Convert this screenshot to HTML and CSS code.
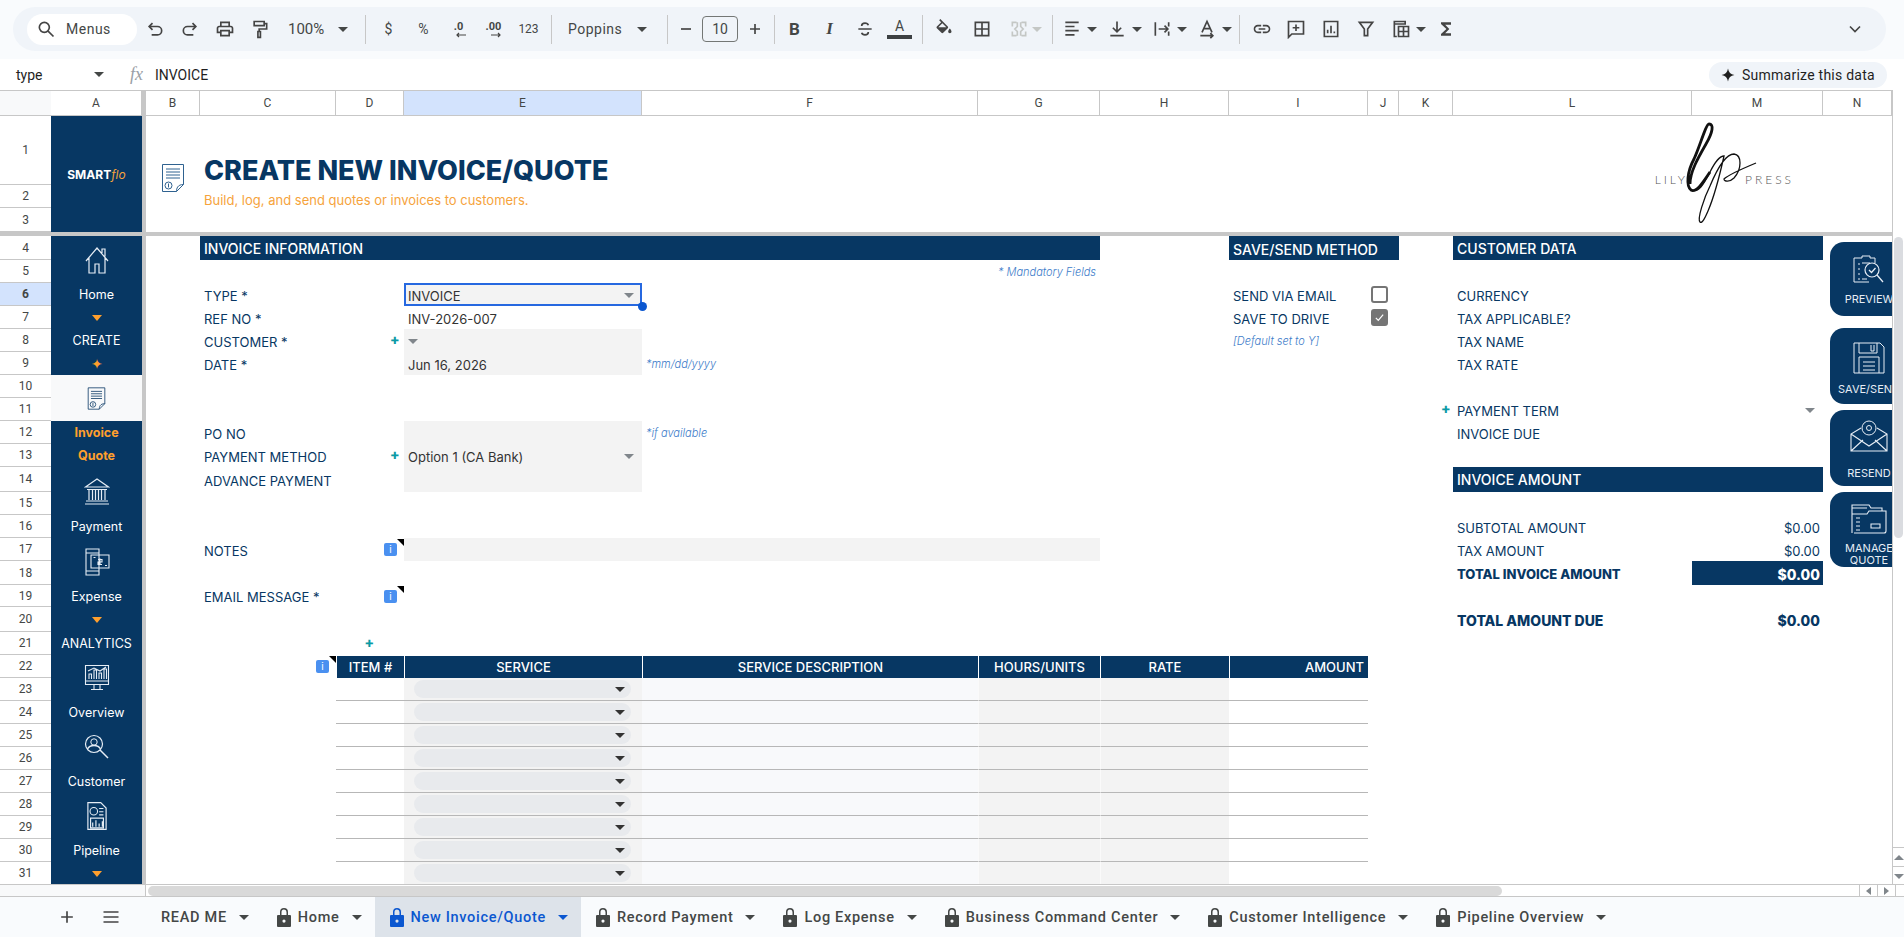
FILE: index.html
```html
<!DOCTYPE html>
<html>
<head>
  <title>New Invoice/Quote</title>
  <link rel="stylesheet" href="styles.css">
</head>
<body>
  <svg class="sprite" width="0" height="0">
    <symbol id="lock" viewBox="0 0 14 20"><path d="M1 8h12a1 1 0 0 1 1 1v10a1 1 0 0 1-1 1H1a1 1 0 0 1-1-1V9a1 1 0 0 1 1-1z M3 8V5a4 4 0 0 1 8 0v3H9.5V5a2.5 2.5 0 0 0-5 0v3z M7 12.5a1.6 1.6 0 1 0 0 3.2a1.6 1.6 0 1 0 0-3.2z" fill-rule="evenodd"/></symbol>
    <symbol id="invoice-doc" viewBox="0 0 24 30"><g fill="none" stroke="currentColor" stroke-width="1"><path d="M1.5 1.5h21v20l-7 7h-14z"/><path d="M15.5 28.5c0-3 1-7 7-7"/><path d="M5 6h14M5 9h14M5 12h14M5 15h14"/><circle cx="7.5" cy="22.5" r="3.5"/><path d="M7.5 20.5v4"/></g></symbol>
  </svg>

  <div class="toolbar">
    <div class="toolbar-pill">
      <div class="menus">
        <svg class="ic" viewBox="0 0 24 24"><circle cx="10" cy="10" r="6" fill="none" stroke="#444" stroke-width="2"/><path d="M14.5 14.5L21 21" stroke="#444" stroke-width="2"/></svg>
        <span>Menus</span>
      </div>
      <div class="tool"><svg class="ic" viewBox="0 0 24 24"><path d="M9 5L5 9l4 4M5 9h10a5 5 0 0 1 0 10H8" fill="none" stroke="#444" stroke-width="2"/></svg></div>
      <div class="tool"><svg class="ic" viewBox="0 0 24 24"><path d="M15 5l4 4-4 4M19 9H9a5 5 0 0 0 0 10h7" fill="none" stroke="#444" stroke-width="2"/></svg></div>
      <div class="tool"><svg class="ic" viewBox="0 0 24 24"><path fill="#444" d="M19 8h-1V3H6v5H5c-1.66 0-3 1.34-3 3v6h4v4h12v-4h4v-6c0-1.66-1.34-3-3-3zM8 5h8v3H8V5zm8 12v2H8v-4h8v2zm2-2v-2H6v2H4v-4c0-.55.45-1 1-1h14c.55 0 1 .45 1 1v4h-2z"/></svg></div>
      <div class="tool"><svg class="ic" viewBox="0 0 24 24"><path d="M5 3h12v5H5zM17 5.5h3V12h-9v3M9.5 15h3v7h-3z" fill="none" stroke="#444" stroke-width="2"/></svg></div>
      <div class="drop zoom-drop"><span>100%</span><i class="caret"></i></div>
      <div class="sep"></div>
      <div class="tool small-text">$</div>
      <div class="tool small-text">%</div>
      <div class="tool dec"><b>.0</b><svg viewBox="0 0 12 6"><path d="M11 3H2M4 1L2 3l2 2" fill="none" stroke="#444" stroke-width="1.2"/></svg></div>
      <div class="tool dec"><b>.00</b><svg viewBox="0 0 12 6"><path d="M1 3h9M8 1l2 2-2 2" fill="none" stroke="#444" stroke-width="1.2"/></svg></div>
      <div class="tool num-text">123</div>
      <div class="sep"></div>
      <div class="drop font-drop"><span>Poppins</span><i class="caret"></i></div>
      <div class="sep"></div>
      <div class="tool minus"><svg class="ic" viewBox="0 0 24 24"><path d="M6 12h12" stroke="#444" stroke-width="2"/></svg></div>
      <div class="size-box">10</div>
      <div class="tool plus"><svg class="ic" viewBox="0 0 24 24"><path d="M6 12h12M12 6v12" stroke="#444" stroke-width="2"/></svg></div>
      <div class="sep"></div>
      <div class="tool bold first-fmt">B</div>
      <div class="tool italic">I</div>
      <div class="tool"><svg class="ic" viewBox="0 0 24 24"><path d="M4 12h16M8 8.5C8 6 10 5 12 5s3.5.8 4 2.5M16 15.5c0 2.500-2 3.500-4 3.500s-3.500-.8-4-2.500" fill="none" stroke="#444" stroke-width="2"/></svg></div>
      <div class="tool text-color"><span>A</span><i></i></div>
      <div class="sep"></div>
      <div class="tool fill-tool"><svg class="ic" viewBox="0 0 24 24"><path fill="#444" d="M16.56 8.94L7.62 0 6.21 1.41l2.38 2.38-5.15 5.15c-.59.59-.59 1.54 0 2.12l5.5 5.5c.29.29.68.44 1.06.44s.77-.15 1.06-.44l5.5-5.5c.59-.58.59-1.53 0-2.12zM5.21 10L10 5.21 14.79 10H5.21zM19 11.5s-2 2.17-2 3.5c0 1.1.9 2 2 2s2-.9 2-2c0-1.33-2-3.5-2-3.5z"/></svg></div>
      <div class="tool borders-tool"><svg class="ic" viewBox="0 0 24 24"><path d="M4 4h16v16H4zM12 4v16M4 12h16" fill="none" stroke="#444" stroke-width="2"/></svg></div>
      <div class="tool merge-tool"><svg class="ic" viewBox="0 0 24 24"><path d="M9 4H4v5M15 4h5v5M9 20H4v-5M15 20h5v-5M10 4v5l-3 3 3 3v5M14 4v5l3 3-3 3v5" fill="none" stroke="#c4c7c5" stroke-width="2"/></svg><i class="caret faint"></i></div>
      <div class="sep"></div>
      <div class="tool-drop"><svg class="ic" viewBox="0 0 24 24"><path d="M4 4h16M4 9h11M4 14h16M4 19h11" stroke="#444" stroke-width="2"/></svg><i class="caret"></i></div>
      <div class="tool-drop"><svg class="ic" viewBox="0 0 24 24"><path d="M12 3v12M7 10.500l5 5 5-5M4 20h16" fill="none" stroke="#444" stroke-width="2"/></svg><i class="caret"></i></div>
      <div class="tool-drop"><svg class="ic" viewBox="0 0 24 24"><path d="M4 4v16M20 4v5M20 15v5M8 12h11M15 8l4 4-4 4" fill="none" stroke="#444" stroke-width="2"/></svg><i class="caret"></i></div>
      <div class="tool-drop"><svg class="ic" viewBox="0 0 24 24"><path d="M6 16L12 3l6 13M8 11.500h8M4 20h15M16 17l3 3-3 3" fill="none" stroke="#444" stroke-width="2"/></svg><i class="caret"></i></div>
      <div class="sep last-sep"></div>
      <div class="tool link-tool"><svg class="ic" viewBox="0 0 24 24"><path fill="#444" d="M3.9 12c0-1.71 1.39-3.1 3.1-3.1h4V7H7c-2.76 0-5 2.24-5 5s2.24 5 5 5h4v-1.9H7c-1.71 0-3.1-1.39-3.1-3.1zM8 13h8v-2H8v2zm9-6h-4v1.9h4c1.71 0 3.1 1.39 3.1 3.1s-1.39 3.1-3.1 3.1h-4V17h4c2.76 0 5-2.24 5-5s-2.24-5-5-5z"/></svg></div>
      <div class="tool"><svg class="ic" viewBox="0 0 24 24"><path d="M3 3h18v15H7l-4 4zM12 6.500v8M8 10.500h8" fill="none" stroke="#444" stroke-width="2"/></svg></div>
      <div class="tool"><svg class="ic" viewBox="0 0 24 24"><path d="M4 3h16v18H4zM8 17v-4M12 17V8M16 17v-2" fill="none" stroke="#444" stroke-width="2"/></svg></div>
      <div class="tool"><svg class="ic" viewBox="0 0 24 24"><path d="M4 4h16l-6 8v8h-4v-8z" fill="none" stroke="#444" stroke-width="2"/></svg></div>
      <div class="tool-drop fn-tool"><svg class="ic" viewBox="0 0 24 24"><path d="M4 3h13v3H4zM4 3v18h3M9 9h12v12H9zM9 15h12M15 9v12" fill="none" stroke="#444" stroke-width="2"/></svg><i class="caret"></i></div>
      <div class="tool"><svg class="ic" viewBox="0 0 24 24"><path fill="#444" d="M18 4H6v2l6.5 6L6 18v2h12v-3h-7l5-5-5-5h7V4z"/></svg></div>
      <div class="tool chevron"><svg class="ic" viewBox="0 0 24 24"><path d="M6 9l6 6 6-6" fill="none" stroke="#444" stroke-width="2"/></svg></div>
    </div>
  </div>

  <div class="formula-bar">
    <div class="name-box"><span>type</span><i class="caret"></i></div>
    <div class="fx">fx</div>
    <div class="formula-text">INVOICE</div>
    <div class="summarize">
      <svg viewBox="0 0 24 24"><path fill="#1f1f1f" d="M12 1c1 6.500 4.500 10 11 11-6.500 1-10 4.500-11 11-1-6.500-4.500-10-11-11 6.500-1 10-4.500 11-11z"/></svg>
      <span>Summarize this data</span>
    </div>
  </div>

  <div class="sheet">
    <!-- column letters -->
    <div class="corner"></div>
    <div class="ch col-a">A</div>
    <div class="ch col-b">B</div>
    <div class="ch col-c">C</div>
    <div class="ch col-d">D</div>
    <div class="ch col-e active">E</div>
    <div class="ch col-f">F</div>
    <div class="ch col-g">G</div>
    <div class="ch col-h">H</div>
    <div class="ch col-i">I</div>
    <div class="ch col-j">J</div>
    <div class="ch col-k">K</div>
    <div class="ch col-l">L</div>
    <div class="ch col-m">M</div>
    <div class="ch col-n">N</div>

    <!-- row numbers -->
    <div class="rh r1">1</div><div class="rh r2">2</div><div class="rh r3">3</div>
    <div class="rh r4">4</div><div class="rh r5">5</div><div class="rh r6 active">6</div>
    <div class="rh r7">7</div><div class="rh r8">8</div><div class="rh r9">9</div>
    <div class="rh r10">10</div><div class="rh r11">11</div><div class="rh r12">12</div>
    <div class="rh r13">13</div><div class="rh r14">14</div><div class="rh r15">15</div>
    <div class="rh r16">16</div><div class="rh r17">17</div><div class="rh r18">18</div>
    <div class="rh r19">19</div><div class="rh r20">20</div><div class="rh r21">21</div>
    <div class="rh r22">22</div><div class="rh r23">23</div><div class="rh r24">24</div>
    <div class="rh r25">25</div><div class="rh r26">26</div><div class="rh r27">27</div>
    <div class="rh r28">28</div><div class="rh r29">29</div><div class="rh r30">30</div>
    <div class="rh r31">31</div>

    <!-- left nav in column A -->
    <div class="side-bg"></div>
    <div class="nav-cell brand r1 sp3"><span>SMART<em>flo</em></span></div>
    <div class="nav-cell r4 sp2">
      <svg class="nav-ic" viewBox="0 0 26 30"><path d="M2 16L13 3l11 13M5 13v15h6v-9h4v9h6V13M18 8V4h3v7.500" fill="none" stroke="#e6edf5" stroke-width="1.200"/></svg>
    </div>
    <div class="nav-cell r6">Home</div>
    <div class="nav-cell r7"><i class="tri"></i></div>
    <div class="nav-cell r8">CREATE</div>
    <div class="nav-cell star r9">✦</div>
    <div class="nav-cell nav-current r10 sp2"><svg class="doc-small"><use href="#invoice-doc"/></svg></div>
    <div class="nav-cell nav-on r12">Invoice</div>
    <div class="nav-cell nav-on r13">Quote</div>
    <div class="nav-cell r14 sp2">
      <svg class="nav-ic" viewBox="0 0 26 28"><path d="M1.500 10L13 2l11.500 8zM3 12.500h20M2 24h22M1 27h24M5 13v10M8.500 13v10M11.500 13v10M14.500 13v10M17.500 13v10M21 13v10" fill="none" stroke="#e6edf5" stroke-width="1.200"/></svg>
    </div>
    <div class="nav-cell r16">Payment</div>
    <div class="nav-cell r17 sp2">
      <svg class="nav-ic" viewBox="0 0 26 30"><path d="M2 2h13v26H2zM2 6h13M2 24h13M7 8h18v13H7zM16 11.500v6M14 12.500h4v2.500h-4v2.500h4M9.500 10.500h2M21 18.500h2" fill="#073763" stroke="#e6edf5" stroke-width="1.100"/></svg>
    </div>
    <div class="nav-cell r19">Expense</div>
    <div class="nav-cell r20"><i class="tri"></i></div>
    <div class="nav-cell r21">ANALYTICS</div>
    <div class="nav-cell r22 sp2">
      <svg class="nav-ic" viewBox="0 0 26 28"><path d="M1.500 1.500h23v19h-23zM1.500 17h23M10 21v4M16 21v4M7 25.500h12M5 15V10h2.500v5M10 15V6h2.500v9M15 15V9h2.500v6M20 15V5h2.500v10M4 7l6-3 6 3 6-4" fill="none" stroke="#e6edf5" stroke-width="1.100"/></svg>
    </div>
    <div class="nav-cell r24">Overview</div>
    <div class="nav-cell r25 sp2">
      <svg class="nav-ic" viewBox="0 0 26 26"><circle cx="10" cy="10" r="8.500" fill="none" stroke="#e6edf5" stroke-width="1.200"/><circle cx="10" cy="8" r="3.200" fill="none" stroke="#e6edf5"/><path d="M3.500 15c1.500-3 3.500-3.500 6.500-3.500s5 .5 6.500 3.500M16 16l8 8" fill="none" stroke="#e6edf5" stroke-width="1.500"/></svg>
    </div>
    <div class="nav-cell r27">Customer</div>
    <div class="nav-cell r28 sp2">
      <svg class="nav-ic" viewBox="0 0 20 28"><path d="M1.500 1.500h12l5 5v20h-17zM4 16h12v9H4zM6 24v-4M9 24v-6M12 24v-3M15 24v-5M12 7h4M12 10h4M12 13h4" fill="none" stroke="#e6edf5" stroke-width="1.100"/><circle cx="7" cy="9.500" r="3.500" fill="none" stroke="#e6edf5"/></svg>
    </div>
    <div class="nav-cell r30">Pipeline</div>
    <div class="nav-cell r31"><i class="tri"></i></div>

    <!-- page title -->
    <div class="title-icon r1 sp3"><svg class="doc-big"><use href="#invoice-doc"/></svg></div>
    <div class="title-block r1 sp3">
      <h1>CREATE NEW INVOICE/QUOTE</h1>
      <p>Build, log, and send quotes or invoices to customers.</p>
    </div>
    <div class="logo r1 sp3">
      <span class="logo-word">LILY</span>
      <svg class="logo-mark" viewBox="0 0 90 104">
        <path d="M28 50C20 62 14 71 9 68C4 64 5 50 12 37C18 24 24 2 27 2C32 2 31 10 24 22C16 36 8 50 8 62" fill="none" stroke="#111" stroke-width="2.800"/>
        <path d="M9 68C16 72 22 62 28 50C32 42 37 34 42 34C38 52 32 75 26 89C23 96 20 102 18 100C15 97 22 76 28 64C33 52 42 32 52 32C60 33 60 47 52 56C48 60 42 60 42 57C46 53 62 46 74 41" fill="none" stroke="#111" stroke-width="1.300"/>
      </svg>
      <span class="logo-word">PRESS</span>
    </div>

    <!-- invoice information -->
    <div class="bar bar-info r4">INVOICE INFORMATION</div>
    <div class="hint hint-right col-f-g r5">* Mandatory Fields</div>

    <div class="label col-c r6">TYPE *</div>
    <div class="input selected col-e r6">INVOICE<i class="caret gray"></i><b class="handle"></b></div>
    <div class="label col-c r7">REF NO *</div>
    <div class="value col-e r7">INV-2026-007</div>
    <div class="label col-c r8">CUSTOMER *</div>
    <div class="add col-d r8">✚</div>
    <div class="input col-e r8"><i class="caret gray"></i></div>
    <div class="label col-c r9">DATE *</div>
    <div class="input col-e r9">Jun 16, 2026</div>
    <div class="hint col-f r9">*mm/dd/yyyy</div>

    <div class="input-bg col-e r12 sp3"></div>
    <div class="label col-c r12">PO NO</div>
    <div class="hint col-f r12">*if available</div>
    <div class="label col-c r13">PAYMENT METHOD</div>
    <div class="add col-d r13">✚</div>
    <div class="input plain col-e r13">Option 1 (CA Bank)<i class="caret gray"></i></div>
    <div class="label col-c r14">ADVANCE PAYMENT</div>

    <div class="label col-c r17">NOTES</div>
    <div class="note col-d r17"><span class="info">i</span><i class="corner-mark"></i></div>
    <div class="input-wide r17"></div>
    <div class="label col-c r19">EMAIL MESSAGE *</div>
    <div class="note col-d r19"><span class="info">i</span><i class="corner-mark"></i></div>

    <div class="add col-c-end r21">✚</div>
    <div class="note col-c r22"><span class="info">i</span><i class="corner-mark"></i></div>

    <!-- line items -->
    <div class="items">
      <div class="item-head">ITEM #</div><div class="item-head">SERVICE</div><div class="item-head">SERVICE DESCRIPTION</div><div class="item-head">HOURS/UNITS</div><div class="item-head">RATE</div><div class="item-head amount">AMOUNT</div>
      <div class="it"></div><div class="it svc"><span class="pill"><i class="caret dark"></i></span></div><div class="it desc"></div><div class="it num"></div><div class="it num"></div><div class="it"></div>
      <div class="it"></div><div class="it svc"><span class="pill"><i class="caret dark"></i></span></div><div class="it desc"></div><div class="it num"></div><div class="it num"></div><div class="it"></div>
      <div class="it"></div><div class="it svc"><span class="pill"><i class="caret dark"></i></span></div><div class="it desc"></div><div class="it num"></div><div class="it num"></div><div class="it"></div>
      <div class="it"></div><div class="it svc"><span class="pill"><i class="caret dark"></i></span></div><div class="it desc"></div><div class="it num"></div><div class="it num"></div><div class="it"></div>
      <div class="it"></div><div class="it svc"><span class="pill"><i class="caret dark"></i></span></div><div class="it desc"></div><div class="it num"></div><div class="it num"></div><div class="it"></div>
      <div class="it"></div><div class="it svc"><span class="pill"><i class="caret dark"></i></span></div><div class="it desc"></div><div class="it num"></div><div class="it num"></div><div class="it"></div>
      <div class="it"></div><div class="it svc"><span class="pill"><i class="caret dark"></i></span></div><div class="it desc"></div><div class="it num"></div><div class="it num"></div><div class="it"></div>
      <div class="it"></div><div class="it svc"><span class="pill"><i class="caret dark"></i></span></div><div class="it desc"></div><div class="it num"></div><div class="it num"></div><div class="it"></div>
      <div class="it"></div><div class="it svc"><span class="pill"><i class="caret dark"></i></span></div><div class="it desc"></div><div class="it num"></div><div class="it num"></div><div class="it"></div>
    </div>

    <!-- save / send -->
    <div class="bar bar-save r4">SAVE/SEND METHOD</div>
    <div class="label col-i r6">SEND VIA EMAIL</div>
    <div class="check-cell col-j r6"><i class="check"></i></div>
    <div class="label col-i r7">SAVE TO DRIVE</div>
    <div class="check-cell col-j r7"><i class="check on"><svg viewBox="0 0 16 16"><path d="M3.500 8.500l3 3 6-7" fill="none" stroke="#fff" stroke-width="1.500"/></svg></i></div>
    <div class="hint col-i r8">[Default set to Y]</div>

    <!-- customer data -->
    <div class="bar bar-cust r4">CUSTOMER DATA</div>
    <div class="label col-l r6">CURRENCY</div>
    <div class="label col-l r7">TAX APPLICABLE?</div>
    <div class="label col-l r8">TAX NAME</div>
    <div class="label col-l r9">TAX RATE</div>
    <div class="add col-k-end r11">✚</div>
    <div class="label col-l r11">PAYMENT TERM</div>
    <div class="input clear col-m r11"><i class="caret gray"></i></div>
    <div class="label col-l r12">INVOICE DUE</div>

    <div class="bar bar-cust r14">INVOICE AMOUNT</div>
    <div class="label col-l r16">SUBTOTAL AMOUNT</div>
    <div class="money col-m r16">$0.00</div>
    <div class="label col-l r17">TAX AMOUNT</div>
    <div class="money col-m r17">$0.00</div>
    <div class="label strong col-l r18">TOTAL INVOICE AMOUNT</div>
    <div class="money total col-m r18">$0.00</div>
    <div class="label due col-l r20">TOTAL AMOUNT DUE</div>
    <div class="money due col-m r20">$0.00</div>

    <!-- floating buttons over column N -->
    <div class="float-col">
      <div class="fbtn fb-preview">
        <svg viewBox="0 0 34 30"><path d="M23 8V3h-5V1h-8v2H2v24h15M6 9h2M6 14h2M6 19h2M6 24h2M10 8h8M10 24h5" fill="none" stroke="#e6edf5"/><circle cx="20" cy="15" r="7" fill="none" stroke="#e6edf5" stroke-width="1.200"/><path d="M17 15l2.500 2.500 4-4.500M25 20l6 7" fill="none" stroke="#e6edf5" stroke-width="1.300"/></svg>
        <span>PREVIEW</span>
      </div>
      <div class="fbtn fb-save">
        <svg viewBox="0 0 32 32"><path d="M1 1h26l4 4v26H1zM6 1v10h18V1M18 3v6h3V3M6 31V15h20v16M10 20h12M10 24h12M10 28h12" fill="none" stroke="#e6edf5"/></svg>
        <span>SAVE/SEND</span>
      </div>
      <div class="fbtn fb-resend">
        <svg viewBox="0 0 38 32"><path d="M11 8L1 14v17h36V14L27 8M1 14l18 12 18-12M1 31l12-11M37 31L25 20" fill="none" stroke="#e6edf5" stroke-width="1.100"/><circle cx="19" cy="8" r="7" fill="#073763" stroke="#e6edf5"/><circle cx="19" cy="8" r="2.500" fill="none" stroke="#e6edf5"/></svg>
        <span>RESEND</span>
      </div>
      <div class="fbtn fb-manage">
        <svg viewBox="0 0 36 32"><path d="M1 31V3h17l2 3h11v3M1 6h15M3 31h30a2 2 0 0 0 2-2V9H18l-2 3H1M5 16h4M5 20h4M5 24h4M5 28h4M20 22h9v4h-9z" fill="none" stroke="#e6edf5" stroke-width="1.100"/></svg>
        <span>MANAGE<br>QUOTE</span>
      </div>
    </div>

    <div class="freeze-v"></div>
    <div class="freeze-h"></div>

    <div class="vscroll">
      <div class="v-thumb"></div>
      <div class="v-btn"><i class="caret up"></i></div>
      <div class="v-btn"><i class="caret gray"></i></div>
    </div>
  </div>

  <div class="hscroll">
    <div class="h-left"></div>
    <div class="h-track"><div class="h-thumb"></div></div>
    <div class="h-btn"><i class="caret left"></i></div>
    <div class="h-btn"><i class="caret right"></i></div>
    <div class="h-end"></div>
  </div>

  <div class="tabs">
    <div class="tab-tool"><svg class="ic" viewBox="0 0 24 24"><path d="M5 12h14M12 5v14" stroke="#444" stroke-width="2"/></svg></div>
    <div class="tab-tool"><svg class="ic" viewBox="0 0 24 24"><path d="M3 6h18M3 12h18M3 18h18" stroke="#444" stroke-width="2"/></svg></div>
    <div class="tab first-tab"><span>READ ME</span><i class="caret"></i></div>
    <div class="tab"><svg class="lock"><use href="#lock"/></svg><span>Home</span><i class="caret"></i></div>
    <div class="tab current"><svg class="lock"><use href="#lock"/></svg><span>New Invoice/Quote</span><i class="caret"></i></div>
    <div class="tab"><svg class="lock"><use href="#lock"/></svg><span>Record Payment</span><i class="caret"></i></div>
    <div class="tab"><svg class="lock"><use href="#lock"/></svg><span>Log Expense</span><i class="caret"></i></div>
    <div class="tab"><svg class="lock"><use href="#lock"/></svg><span>Business Command Center</span><i class="caret"></i></div>
    <div class="tab"><svg class="lock"><use href="#lock"/></svg><span>Customer Intelligence</span><i class="caret"></i></div>
    <div class="tab"><svg class="lock"><use href="#lock"/></svg><span>Pipeline Overview</span><i class="caret"></i></div>
  </div>
</body>
</html>
```

FILE: styles.css
```css
body {
  margin: 0;
  height: 937px;
  overflow: hidden;
  display: flex;
  flex-direction: column;
  background: #fff;
  color: #444746;
  font-family: Roboto, "Liberation Sans", sans-serif;
}

.sprite {
  position: absolute;
}

.ic {
  width: 20px;
  height: 20px;
  display: block;
  flex: none;
}

/* carets */
.caret {
  display: block;
  flex: none;
  width: 0;
  height: 0;
  border-left: 5px solid transparent;
  border-right: 5px solid transparent;
  border-top: 5px solid #444746;
}

.caret.gray {
  border-top-color: #80868b;
}

.caret.dark {
  border-top-color: #333;
}

.caret.faint {
  border-top-color: #c4c7c5;
}

.caret.up {
  border-top: 0;
  border-bottom: 5px solid #80868b;
}

.caret.left {
  border: 0;
  border-top: 4px solid transparent;
  border-bottom: 4px solid transparent;
  border-right: 5px solid #80868b;
}

.caret.right {
  border: 0;
  border-top: 4px solid transparent;
  border-bottom: 4px solid transparent;
  border-left: 5px solid #80868b;
}

/* toolbar */
.toolbar {
  height: 59px;
  flex: none;
  padding: 7px 18px 8px 13px;
  box-sizing: border-box;
  background: #f9fbfd;
}

.toolbar-pill {
  height: 44px;
  display: flex;
  align-items: center;
  padding: 0 20px 0 14px;
  background: #f0f4f9;
  border-radius: 22px;
}

.menus {
  width: 110px;
  height: 31px;
  flex: none;
  box-sizing: border-box;
  display: flex;
  align-items: center;
  gap: 10px;
  padding-left: 9px;
  background: #fff;
  border-radius: 16px;
  font-size: 14px;
  letter-spacing: 0.5px;
}

.tool {
  width: 35px;
  height: 30px;
  flex: none;
  display: flex;
  align-items: center;
  justify-content: center;
  font-size: 14px;
}

.sep {
  width: 1px;
  height: 29px;
  flex: none;
  margin: 0 5px;
  background: #c7c7c7;
}

.drop {
  height: 30px;
  flex: none;
  display: flex;
  align-items: center;
  box-sizing: border-box;
  font-size: 14px;
}

.zoom-drop {
  width: 83px;
  padding-left: 11px;
  font-size: 15px;
  gap: 14px;
}

.font-drop {
  width: 105px;
  padding-left: 11px;
  gap: 15px;
  letter-spacing: 0.5px;
}

.small-text {
  font-size: 14px;
}

.num-text {
  font-size: 12px;
}

.dec {
  flex-direction: column;
  font-size: 11px;
  line-height: 11px;
}

.dec svg {
  width: 12px;
  height: 6px;
  margin-left: 4px;
}

.minus {
  width: 26px;
}

.size-box {
  width: 36px;
  height: 26px;
  flex: none;
  margin: 0 3px;
  box-sizing: border-box;
  border: 1px solid #747775;
  border-radius: 4px;
  text-align: center;
  line-height: 24px;
  font-size: 14px;
}

.plus {
  width: 28px;
}

.first-fmt {
  margin-left: -3px;
}

.bold {
  font-weight: 700;
  font-size: 17px;
}

.italic {
  font-style: italic;
  font-weight: 700;
  font-size: 17px;
  font-family: "Liberation Serif", serif;
}

.text-color {
  flex-direction: column;
  font-size: 14px;
  line-height: 15px;
}

.text-color i {
  display: block;
  width: 25px;
  height: 4px;
  margin-top: 1px;
  background: #3c4043;
}

.fill-tool {
  width: 32px;
}

.borders-tool {
  width: 44px;
}

.merge-tool {
  width: 43px;
  gap: 3px;
  justify-content: flex-start;
  padding-left: 5px;
  box-sizing: border-box;
}

.tool-drop {
  width: 45px;
  height: 30px;
  flex: none;
  display: flex;
  align-items: center;
  box-sizing: border-box;
  padding-left: 4px;
  gap: 5px;
}

.last-sep {
  margin: 0 5px 0 1px;
}

.link-tool {
  width: 33px;
}

.fn-tool {
  padding-left: 8px;
}

.chevron {
  margin-left: auto;
  width: 22px;
}

/* formula bar */
.formula-bar {
  height: 31px;
  flex: none;
  display: flex;
  align-items: center;
  font-size: 14px;
  color: #1f1f1f;
  box-sizing: border-box;
  padding-right: 17px;
}

.name-box {
  width: 104px;
  flex: none;
  display: flex;
  align-items: center;
  justify-content: space-between;
  box-sizing: border-box;
  padding: 0 0 0 16px;
}

.fx {
  width: 51px;
  flex: none;
  box-sizing: border-box;
  padding-left: 26px;
  font-family: "Liberation Serif", serif;
  font-style: italic;
  font-size: 18px;
  color: #9aa0a6;
}

.summarize {
  margin-left: auto;
  width: 178px;
  height: 26px;
  box-sizing: border-box;
  display: flex;
  align-items: center;
  gap: 7px;
  padding-left: 12px;
  background: #f0f4f9;
  border-radius: 13px;
  letter-spacing: 0.25px;
}

.summarize svg {
  width: 14px;
  height: 14px;
}

/* sheet grid */
.sheet {
  height: 794px;
  flex: none;
  display: grid;
  overflow: hidden;
  grid-template-columns:
    [head] 51px [a] 91px [fz] 4px [b] 54px [c] 136px [d] 68px [e] 238px [f] 336px
    [g] 122px [h] 129px [i] 139px [j] 31px [k] 54px [l] 239px [m] 131px [n] 69px [vs] 12px;
  grid-template-rows:
    [hdr] 26px [r1] 69px [r2] 23px [r3] 24px [fzr] 4px [r4] 24px [r5] 23px [r6] 23px [r7] 23px
    [r8] 23px [r9] 23px [r10] 23px [r11] 23px [r12] 23px [r13] 23px [r14] 25px [r15] 23px
    [r16] 23px [r17] 23px [r18] 24px [r19] 22px [r20] 25px [r21] 23px [r22] 23px [r23] 23px
    [r24] 23px [r25] 23px [r26] 23px [r27] 23px [r28] 23px [r29] 23px [r30] 23px [r31] 23px [end];
  font-family: Inter, "Noto Sans", sans-serif;
  font-size: 13px;
  color: #073763;
}

.r1 { grid-row-start: r1; }
.r2 { grid-row-start: r2; }
.r3 { grid-row-start: r3; }
.r4 { grid-row-start: r4; }
.r5 { grid-row-start: r5; }
.r6 { grid-row-start: r6; }
.r7 { grid-row-start: r7; }
.r8 { grid-row-start: r8; }
.r9 { grid-row-start: r9; }
.r10 { grid-row-start: r10; }
.r11 { grid-row-start: r11; }
.r12 { grid-row-start: r12; }
.r13 { grid-row-start: r13; }
.r14 { grid-row-start: r14; }
.r15 { grid-row-start: r15; }
.r16 { grid-row-start: r16; }
.r17 { grid-row-start: r17; }
.r18 { grid-row-start: r18; }
.r19 { grid-row-start: r19; }
.r20 { grid-row-start: r20; }
.r21 { grid-row-start: r21; }
.r22 { grid-row-start: r22; }
.r23 { grid-row-start: r23; }
.r24 { grid-row-start: r24; }
.r25 { grid-row-start: r25; }
.r26 { grid-row-start: r26; }
.r27 { grid-row-start: r27; }
.r28 { grid-row-start: r28; }
.r29 { grid-row-start: r29; }
.r30 { grid-row-start: r30; }
.r31 { grid-row-start: r31; }
.sp2 { grid-row-end: span 2; }
.sp3 { grid-row-end: span 3; }

.col-a { grid-column-start: a; }
.col-b { grid-column-start: b; }
.col-c { grid-column-start: c; }
.col-d { grid-column-start: d; }
.col-e { grid-column-start: e; }
.col-f { grid-column: f / h; }
.col-g { grid-column-start: g; }
.col-h { grid-column-start: h; }
.col-i { grid-column-start: i; }
.col-j { grid-column-start: j; }
.col-k { grid-column-start: k; }
.col-l { grid-column-start: l; }
.col-m { grid-column-start: m; }
.col-n { grid-column-start: n; }

.corner {
  grid-column: head;
  grid-row: hdr;
  background: #f8f9fa;
  border-top: 1px solid #c7c7c7;
  border-bottom: 1px solid #c7c7c7;
}

.ch {
  grid-row: hdr;
  display: flex;
  align-items: center;
  justify-content: center;
  border-top: 1px solid #c7c7c7;
  border-bottom: 1px solid #c7c7c7;
  border-right: 1px solid #c7c7c7;
  font-family: Roboto, sans-serif;
  font-size: 12px;
  color: #444746;
}

.col-f.ch {
  grid-column: f;
}

.ch.active {
  background: #d3e3fd;
}

.rh {
  grid-column: head;
  display: flex;
  align-items: center;
  justify-content: center;
  border-bottom: 1px solid #c7c7c7;
  font-family: Roboto, sans-serif;
  font-size: 12px;
  color: #444746;
}

.rh.active {
  background: #d3e3fd;
  font-weight: 700;
}

.freeze-v {
  grid-column: fz;
  grid-row: hdr / end;
  background: #c7c7c7;
}

.freeze-h {
  grid-column: head / vs;
  grid-row: fzr;
  background: #c7c7c7;
}

/* nav column */
.side-bg {
  grid-column: a;
  grid-row: r1 / end;
  background: #073763;
}

.nav-cell {
  grid-column: a;
  display: flex;
  align-items: center;
  justify-content: center;
  color: #fff;
  font-size: 12.5px;
}

.brand {
  font-size: 12px;
  font-weight: 700;
}

.brand em {
  color: #f6a33c;
  font-weight: 400;
}

.nav-ic {
  width: 26px;
  height: 30px;
  display: block;
}

.tri {
  display: block;
  width: 0;
  height: 0;
  border-left: 5px solid transparent;
  border-right: 5px solid transparent;
  border-top: 6px solid #ff9f2d;
}

.star {
  color: #ff9f2d;
  font-size: 14px;
}

.nav-current {
  background: #f8f9fa;
  color: #073763;
}

.nav-on {
  color: #ff9f2d;
  font-weight: 700;
}

.doc-small {
  width: 19px;
  height: 25px;
}

/* title */
.title-icon {
  grid-column: b;
  display: flex;
  align-items: center;
  justify-content: center;
  padding-left: 0;
  color: #2f6290;
}

.doc-big {
  width: 24px;
  height: 30px;
  margin-top: 8px;
}

.title-block {
  grid-column: c / i;
  padding: 35px 0 0 4px;
}

.title-block h1 {
  margin: 0;
  font-size: 27px;
  line-height: 40px;
  font-weight: 800;
  color: #073763;
}

.title-block p {
  margin: 0;
  font-size: 13px;
  line-height: 18px;
  color: #f6a33c;
}

.logo {
  grid-column: l / n;
  display: flex;
  align-items: center;
  justify-content: flex-end;
  padding-right: 29px;
}

.logo-word {
  margin-top: 10px;
  font-family: Lato, sans-serif;
  font-weight: 300;
  font-size: 12px;
  letter-spacing: 3px;
  color: #555;
}

.logo-mark {
  width: 90px;
  height: 104px;
  flex: none;
  margin: 0 -27px 0 -6px;
}

/* bars and cells */
.bar {
  display: flex;
  align-items: center;
  padding-left: 4px;
  background: #073763;
  color: #fff;
  font-size: 14px;
  font-weight: 500;
}

.bar-info {
  grid-column: c / h;
}

.bar-save {
  grid-column: i / k;
  padding-top: 2px;
}

.bar-cust {
  grid-column: l / n;
}

.label,
.value {
  display: flex;
  align-items: center;
  padding: 2px 0 0 4px;
  white-space: nowrap;
}

.strong,
.due {
  font-weight: 800;
}

.label.due {
  font-size: 14px;
}

.value {
  color: #333;
}

.input {
  position: relative;
  display: flex;
  align-items: center;
  justify-content: space-between;
  padding: 2px 8px 0 4px;
  background: #f3f3f3;
  color: #333;
  white-space: nowrap;
}

.input.plain {
  background: none;
}

.input.clear {
  background: none;
  justify-content: flex-end;
}

.input.selected {
  box-shadow: inset 0 0 0 2px #2668e0;
}

.input-bg {
  background: #f3f3f3;
}

.input-wide {
  grid-column: e / h;
  background: #f3f3f3;
}

.handle {
  position: absolute;
  right: -5px;
  bottom: -5px;
  width: 9px;
  height: 9px;
  border-radius: 50%;
  background: #0b57d0;
}

.hint {
  display: flex;
  align-items: center;
  padding-left: 4px;
  font-size: 11px;
  font-style: italic;
  font-weight: 300;
  color: #3d7cc9;
}

.col-f-g {
  grid-column: f / h;
}

.hint-right {
  justify-content: flex-end;
  padding-right: 4px;
}

.add {
  display: flex;
  align-items: center;
  justify-content: flex-end;
  padding-right: 5px;
  font-family: "DejaVu Sans", sans-serif;
  font-size: 10px;
  color: #0b9aa5;
}

.col-c-end {
  grid-column: d;
  justify-content: flex-start;
  padding-left: 29px;
}

.col-k-end {
  grid-column: k;
  padding-right: 3px;
}

.note {
  display: flex;
  justify-content: flex-end;
}

.info {
  width: 13px;
  height: 13px;
  margin-top: 5px;
  background: #4a90f0;
  border-radius: 2px;
  color: #fff;
  font-size: 10px;
  line-height: 13px;
  text-align: center;
}

.corner-mark {
  display: block;
  width: 0;
  height: 0;
  margin-top: 1px;
  border-left: 7px solid transparent;
  border-top: 7px solid #000;
}

/* line items */
.items {
  grid-column: d / j;
  grid-row: r22 / end;
  display: grid;
  grid-template-columns: 68px 238px 336px 122px 129px 139px;
  grid-auto-rows: 23px;
}

.item-head {
  display: flex;
  align-items: center;
  justify-content: center;
  margin-top: 1px;
  background: #073763;
  border-left: 1px solid #fff;
  color: #fff;
  font-weight: 500;
}

.item-head.amount {
  justify-content: flex-end;
  padding-right: 4px;
}

.it {
  border-bottom: 1px solid #b7b7b7;
  box-sizing: border-box;
}

.svc {
  display: flex;
  align-items: center;
  padding: 0 10px;
  background: #f3f3f3;
}

.desc {
  background: #f8f9fb;
}

.num {
  background: #f3f3f3;
  border-left: 1px solid #fafafa;
}

.pill {
  width: 217px;
  height: 18px;
  display: flex;
  align-items: center;
  justify-content: flex-end;
  padding-right: 6px;
  box-sizing: border-box;
  background: #e8eaed;
  border-radius: 9px;
}

/* checks and money */
.check-cell {
  display: flex;
  align-items: center;
  padding-left: 3px;
}

.check {
  display: block;
  width: 17px;
  height: 17px;
  box-sizing: border-box;
  border: 2px solid #757575;
  border-radius: 3px;
}

.check.on {
  background: #757575;
}

.check svg {
  display: block;
  width: 13px;
  height: 13px;
}

.money {
  display: flex;
  align-items: center;
  justify-content: flex-end;
  padding: 2px 3px 0 0;
  color: #073763;
}

.money.total {
  background: #073763;
  color: #fff;
  font-weight: 800;
  font-size: 14px;
}

.money.due {
  font-size: 14px;
}

/* floating buttons */
.float-col {
  grid-column: n;
  grid-row: r4 / r27;
  overflow: hidden;
  display: flex;
  flex-direction: column;
  padding: 6px 0 0 7px;
}

.fbtn {
  width: 78px;
  flex: none;
  box-sizing: border-box;
  display: flex;
  flex-direction: column;
  align-items: center;
  background: #073763;
  border-radius: 14px;
  color: #e6edf5;
  font-size: 11px;
  line-height: 12px;
  text-align: center;
}

.fb-preview {
  height: 74px;
  padding-top: 13px;
  gap: 8px;
}

.fb-preview svg {
  width: 34px;
  height: 30px;
}

.fb-save {
  height: 76px;
  margin-top: 12px;
  padding-top: 14px;
  gap: 9px;
}

.fb-save svg {
  width: 32px;
  height: 32px;
}

.fb-resend {
  height: 76px;
  margin-top: 6px;
  padding-top: 10px;
  gap: 15px;
}

.fb-resend svg {
  width: 38px;
  height: 32px;
}

.fb-manage {
  height: 75px;
  margin-top: 6px;
  padding-top: 10px;
  gap: 8px;
}

.fb-manage svg {
  width: 36px;
  height: 32px;
}

/* scrollbars */
.vscroll {
  grid-column: vs;
  grid-row: hdr / end;
  display: flex;
  flex-direction: column;
  padding-top: 147px;
  box-sizing: border-box;
  border-left: 1px solid #c7c7c7;
  background: #fff;
}

.v-thumb {
  width: 9px;
  height: 301px;
  margin: 0 0 auto 1px;
  background: #dadce0;
  border-radius: 5px;
}

.v-btn {
  height: 18px;
  display: flex;
  align-items: center;
  justify-content: center;
  border-top: 1px solid #c7c7c7;
}

.hscroll {
  height: 12px;
  flex: none;
  display: flex;
  box-sizing: border-box;
  border-top: 1px solid #c7c7c7;
}

.h-left {
  width: 146px;
  background: #f8f9fa;
  border-right: 1px solid #c7c7c7;
  box-sizing: border-box;
}

.h-track {
  width: 1713px;
  padding: 1px 0 0 2px;
  box-sizing: border-box;
}

.h-thumb {
  width: 1354px;
  height: 10px;
  background: #d9d9d9;
  border-radius: 5px;
}

.h-btn {
  width: 17px;
  display: flex;
  align-items: center;
  justify-content: center;
  border-left: 1px solid #c7c7c7;
}

.h-end {
  flex: 1;
  border-left: 1px solid #c7c7c7;
}

/* sheet tabs */
.tabs {
  height: 41px;
  flex: none;
  display: flex;
  align-items: stretch;
  padding-left: 45px;
  box-sizing: border-box;
  border-top: 1px solid #c7c7c7;
  background: #f9fbfd;
}

.tab-tool {
  width: 44px;
  display: flex;
  align-items: center;
  justify-content: center;
}

.tab {
  display: flex;
  align-items: center;
  gap: 7px;
  padding: 0 13px 0 15px;
  font-size: 14.5px;
  font-weight: 500;
  letter-spacing: 0.7px;
  white-space: nowrap;
}

.tab .caret {
  margin-left: 5px;
}

.first-tab {
  margin-left: 13px;
}

.lock {
  width: 14px;
  height: 20px;
  flex: none;
  fill: #444746;
}

.tab.current {
  background: #dde3ea;
  color: #0b57d0;
}

.tab.current .lock {
  fill: #0b57d0;
}

.tab.current .caret {
  border-top-color: #0b57d0;
}
```
